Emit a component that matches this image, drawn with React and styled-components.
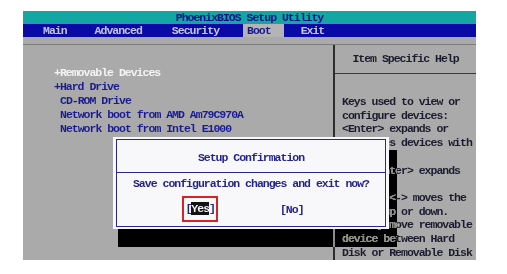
import React from "react";
import styled, { createGlobalStyle } from "styled-components";

const GlobalStyle = createGlobalStyle`
  html, body {
    margin: 0;
    padding: 0;
    background: #ffffff;
  }
`;

const Page = styled.div`
  padding: 11px 0 0 23px;
  font-family: "Liberation Mono", "DejaVu Sans Mono", monospace;
  font-weight: 700;
  font-size: 11.5px;
  letter-spacing: -1px;
`;

const Screen = styled.div`
  position: relative;
  width: 453px;
  height: 249px;
  background: #aaaaaa;
  overflow: hidden;
  display: flex;
  flex-direction: column;
`;

const TitleBar = styled.div`
  height: 13px;
  line-height: 13px;
  background: #14a6a2;
  color: #10108c;
  text-align: center;
  white-space: pre;
`;

const MenuBar = styled.div`
  height: 13px;
  line-height: 13px;
  background: #0a0aa6;
  display: flex;
`;

const MenuItem = styled.div`
  margin-left: ${p => p.$ml}px;
  padding: ${p => (p.$active ? "0 13px 0 4px" : "0")};
  background: ${p => (p.$active ? "#b4b4b4" : "transparent")};
  color: ${p => (p.$active ? "#1a1a8a" : "#c4c4e4")};
`;

const Body = styled.div`
  flex: 1;
  margin-top: 7px;
  border-top: 1px solid #7c7c7c;
  display: grid;
  grid-template-columns: 310px 1fr;
  min-height: 0;
`;

const BootPanel = styled.div`
  padding: 21px 0 0 31px;
  line-height: 14px;
`;

const BootItem = styled.div`
  white-space: pre;
  color: ${p => (p.$selected ? "#f4f4f4" : "#1c1c92")};
  padding-left: ${p => (p.$indent ? 6 : 0)}px;
`;

const HelpPanel = styled.div`
  border-left: 2px solid #2c2c2c;
  display: flex;
  flex-direction: column;
`;

const HelpHeader = styled.div`
  height: 28px;
  line-height: 28px;
  text-align: center;
  color: #1c1c2c;
  border-bottom: 1px solid #3a3a3a;
`;

const HelpText = styled.div`
  padding: 21px 0 0 7px;
  line-height: 13.7px;
  color: #1c1c2e;
  white-space: pre;
`;

const Shadow = styled.div`
  position: absolute;
  left: 95px;
  top: 139px;
  width: 279px;
  height: 97px;
  backdrop-filter: invert(1) contrast(3.1) brightness(0.55);
`;

const Dialog = styled.div`
  position: absolute;
  left: 90px;
  top: 126px;
  width: 276px;
  height: 92px;
  box-sizing: border-box;
  padding: 2px 3px;
  background: #f8f8fa;
  display: flex;
`;

const DialogFrame = styled.div`
  flex: 1;
  border: 1.5px solid #2a2a86;
  color: #24248e;
  display: flex;
  flex-direction: column;
`;

const DialogTitle = styled.div`
  padding-top: 5px;
  height: 27px;
  line-height: 26px;
  text-align: center;
  border-bottom: 1px solid #2a2a86;
`;

const DialogMessage = styled.div`
  padding-top: 4px;
  line-height: 14px;
  text-align: center;
`;

const ButtonRow = styled.div`
  margin-top: 5px;
  display: flex;
  justify-content: center;
  align-items: center;
  gap: 62px;
  padding-right: 16px;
`;

const Choice = styled.div`
  line-height: 14px;
  padding: ${p => (p.$focused ? "4px 1px" : "0")};
  border: ${p => (p.$focused ? "2px solid #d4242a" : "none")};
  margin-top: ${p => (p.$focused ? 0 : 2)}px;
  white-space: pre;
`;

const Highlight = styled.span`
  background: #121212;
  color: #f4f4f4;
`;

const helpLines = [
  "Keys used to view or",
  "configure devices:",
  "<Enter> expands or",
  "collapses devices with",
  "a + or -",
  "<Ctrl+Enter> expands",
  "all",
  "<+> and <-> moves the",
  "device up or down.",
  "<n> May move removable",
  "device between Hard",
  "Disk or Removable Disk",
];

export default function App() {
  return (
    <>
      <GlobalStyle />
      <Page>
        <Screen>
          <TitleBar>PhoenixBIOS Setup Utility</TitleBar>
          <MenuBar>
            <MenuItem $ml={20}>Main</MenuItem>
            <MenuItem $ml={28}>Advanced</MenuItem>
            <MenuItem $ml={30}>Security</MenuItem>
            <MenuItem $ml={24} $active>Boot</MenuItem>
            <MenuItem $ml={17}>Exit</MenuItem>
          </MenuBar>
          <Body>
            <BootPanel>
              <BootItem $selected>+Removable Devices</BootItem>
              <BootItem>+Hard Drive</BootItem>
              <BootItem $indent>CD-ROM Drive</BootItem>
              <BootItem $indent>Network boot from AMD Am79C970A</BootItem>
              <BootItem $indent>Network boot from Intel E1000</BootItem>
            </BootPanel>
            <HelpPanel>
              <HelpHeader>Item Specific Help</HelpHeader>
              <HelpText>
                {helpLines.map(line => (
                  <div key={line}>{line}</div>
                ))}
              </HelpText>
            </HelpPanel>
          </Body>
          <Shadow />
          <Dialog>
            <DialogFrame>
              <DialogTitle>Setup Confirmation</DialogTitle>
              <DialogMessage>Save configuration changes and exit now?</DialogMessage>
              <ButtonRow>
                <Choice $focused>
                  [<Highlight>Yes</Highlight>]
                </Choice>
                <Choice>[No]</Choice>
              </ButtonRow>
            </DialogFrame>
          </Dialog>
        </Screen>
      </Page>
    </>
  );
}
